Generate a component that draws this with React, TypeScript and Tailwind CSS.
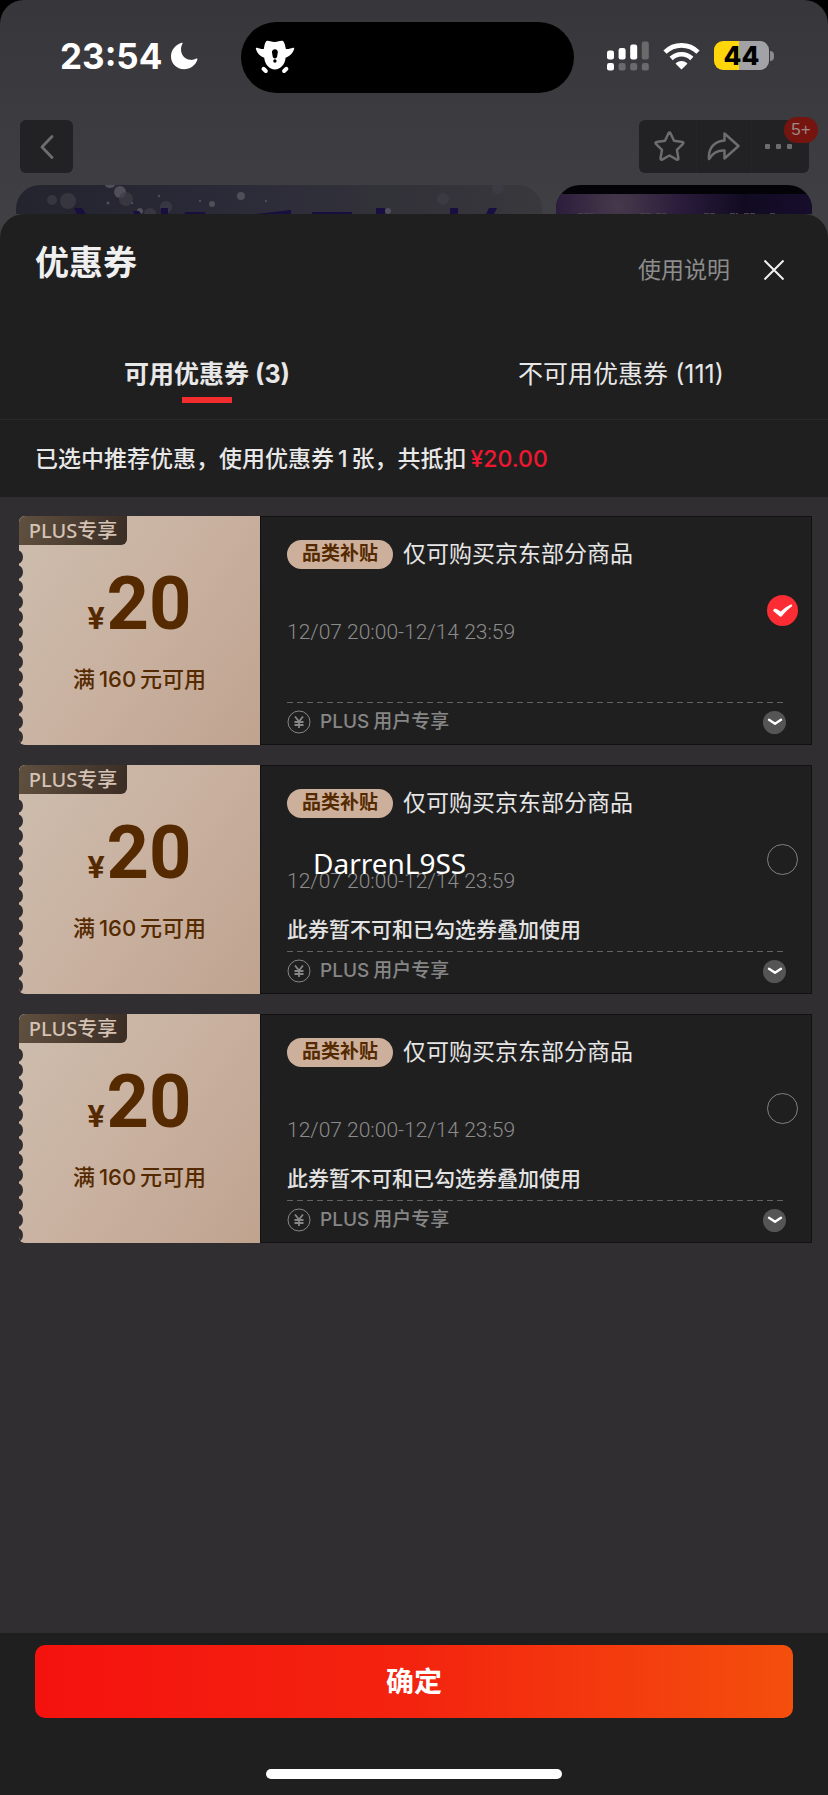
import { useState } from "react";

type Coupon = { id: number; note?: string };

const COUPONS: Coupon[] = [
  { id: 1 },
  { id: 2, note: "此券暂不可和已勾选券叠加使用" },
  { id: 3, note: "此券暂不可和已勾选券叠加使用" },
];

const NOTCHES = [0, 1, 2, 3, 4, 5, 6, 7, 8, 9, 10, 11, 12];

function StatusBar() {
  return (
    <div className="flex h-[93px] items-end justify-between">
      <div className="flex h-[71px] w-[241px] items-center gap-2 pb-1 pl-[60px] text-white">
        <span className="text-[35px] leading-[40px] font-bold">23:54</span>
        <svg className="h-7 w-7" viewBox="0 0 28 28" fill="currentColor" aria-hidden="true">
          <path d="M11.6.8C4.900 3 1 8.500 1 14.500 1 21.800 6.800 27.200 14 27.200c6.200 0 11.800-4.200 13.400-9.800.2-.8-.4-1.200-1.100-.8-2 1.100-4 1.500-6.100 1.200-5.400-.7-9.200-5-9.200-10.400 0-2 .5-3.900 1.500-5.600.4-.7 0-1.200-.9-1z" />
        </svg>
      </div>
      <div className="flex h-[71px] w-[333px] items-center rounded-full bg-black pb-0.5 pl-3.5">
        <svg className="h-[34px] w-10" viewBox="0 0 40 34" aria-hidden="true">
          <path
            fill="#fff"
            d="M11.500 1C13 0 15.500 1.900 19.500 1.900S26 0 28 1c1.500 1 2.100 4.500 2.900 8 2.300.4 5-.6 7.100-1.200.9-.2 1.500.4 1.200 1.300-1.200 3.600-4.200 7.400-8.600 8.700C30 24.500 25.500 29.500 19.900 29.500S10 24.500 9.200 17.800C4.800 16.500 2 12.700.9 9.100.6 8.200 1.200 7.600 2.100 7.800 4.300 8.400 6.400 9.400 8.800 9c.6-3.500 1.200-7 2.700-8z"
          />
          <path d="M19.900 9.200c-1.900 0-3.100 1.400-2.900 3.200l.7 4.200c.2 1.200 1 1.800 2.200 1.800s2-.6 2.200-1.800l.7-4.200c.2-1.800-1-3.200-2.900-3.200z" />
          <circle cx="19.900" cy="21" r="1.700" />
          <path d="M8.500 28.800l2.300 2.200M31.400 28.800L29.100 31" stroke="#fff" strokeWidth="4" strokeLinecap="round" />
        </svg>
      </div>
      <div className="flex h-[71px] w-[254px] items-center gap-3.5 pb-1 pl-[33px] text-white">
        <svg className="h-[30px] w-[42px]" viewBox="0 0 42 30" fill="currentColor" aria-hidden="true">
          <rect x="0" y="9.500" width="7" height="9" rx="2.200" />
          <rect x="11.600" y="7" width="7" height="11.500" rx="2.200" />
          <rect x="23.200" y="3.500" width="7" height="15" rx="2.200" />
          <rect x="34.800" y="0.500" width="7" height="18" rx="2.200" opacity=".25" />
          <rect x="0" y="22" width="7" height="7.500" rx="2.200" />
          <rect x="11.600" y="22" width="7" height="7.500" rx="2.200" opacity=".25" />
          <rect x="23.200" y="22" width="7" height="7.500" rx="2.200" opacity=".25" />
          <rect x="34.800" y="22" width="7" height="7.500" rx="2.200" opacity=".25" />
        </svg>
        <svg className="h-7 w-[37px]" viewBox="0 0 37 28" aria-hidden="true">
          <g fill="none" stroke="currentColor" strokeWidth="4.600">
            <path d="M2 10.100a23.500 23.500 0 0 1 33 0" />
            <path d="M8.200 16.500a14.700 14.700 0 0 1 20.600 0" />
          </g>
          <path fill="currentColor" d="M18.500 27.600l-5.600-5.500c-.3-.4-.3-.9.1-1.200a8.600 8.600 0 0 1 11 0c.4.3.4.8.1 1.200z" />
        </svg>
        <div className="flex items-center gap-px">
          <span className="flex h-[29px] w-[55px] items-center justify-center rounded-[9px] bg-[linear-gradient(90deg,#ffd60a_45%,#a3a3a7_45%)] text-[26px] leading-[29px] font-extrabold text-black">
            44
          </span>
          <span className="h-2.5 w-1 rounded-r-full bg-[#8b8b8f]" />
        </div>
      </div>
    </div>
  );
}

function Toolbar() {
  return (
    <div className="mt-[27px] flex justify-between pr-[19px] pl-5 text-[#6d6d6f]">
      <button type="button" aria-label="返回" className="flex h-[53px] w-[53px] items-center justify-center rounded-md bg-[#222224]">
        <svg className="h-6 w-4" viewBox="0 0 16 24" fill="none" stroke="currentColor" strokeWidth="2.800" strokeLinecap="round" strokeLinejoin="round">
          <path d="M13 1.500L3 12l10 10.500" />
        </svg>
      </button>
      <div className="relative grid h-[53px] w-[170px] grid-cols-3 rounded-md bg-[#222224]">
        <button type="button" aria-label="收藏" className="flex items-center justify-center pl-1">
          <svg className="h-[31px] w-[31px]" viewBox="0 0 31 31" fill="none" stroke="currentColor" strokeWidth="2.500" strokeLinejoin="round">
            <path d="M15.500 1.600c.5 0 .8.300 1 .7l3.500 7.400 8.400 1.200c1 .2 1.300 1.200.6 1.900l-6.100 6 1.500 8.600c.2 1-.7 1.600-1.600 1.200l-7.300-4.100-7.400 4.100c-.9.400-1.700-.2-1.600-1.200L8 18.800l-6.100-6c-.7-.7-.3-1.700.7-1.900L11 9.700l3.500-7.400c.2-.4.5-.7 1-.7z" />
          </svg>
        </button>
        <button type="button" aria-label="分享" className="flex items-center justify-center border-x border-[#252527]">
          <svg className="h-[31px] w-[33px]" viewBox="0 0 33 31" fill="none" stroke="currentColor" strokeWidth="2.500" strokeLinejoin="round">
            <path d="M17.500 2.500L31.500 15 17.500 27.500v-8C10.500 19 6 21.500 2 28 1 17 7.500 10 17.500 9.500z" />
          </svg>
        </button>
        <button type="button" aria-label="更多" className="flex items-center justify-center gap-1.5 pr-1">
          <span className="h-[5px] w-[5px] rounded-[1px] bg-[#6d6d6f]" />
          <span className="h-[5px] w-[5px] rounded-[1px] bg-[#6d6d6f]" />
          <span className="h-[5px] w-[5px] rounded-[1px] bg-[#6d6d6f]" />
        </button>
        <span className="absolute -top-[3px] -right-[9px] flex h-[26px] w-[34px] items-center justify-center rounded-full bg-[#76150f] font-['Liberation_Sans'] text-[17px] leading-5 text-[#9d8886]">
          5+
        </span>
      </div>
    </div>
  );
}

function Banners() {
  return (
    <div className="mt-3 flex h-[29px] gap-3.5 px-4" aria-hidden="true">
      <div className="flex-1 overflow-hidden rounded-t-[24px] bg-[linear-gradient(90deg,#24242f,#2b2a38_35%,#33323a_70%,#39383d)]">
        <svg className="h-[29px] w-full" viewBox="0 0 526 29" preserveAspectRatio="xMinYMin slice">
          <g fill="#504f57">
            <circle cx="104" cy="7" r="6" />
            <ellipse cx="94" cy="0" rx="5" ry="3" />
            <circle cx="225" cy="11" r="4" />
            <circle cx="196" cy="19" r="3" />
            <circle cx="124" cy="26" r="3" />
            <circle cx="372" cy="26" r="3" />
            <circle cx="92" cy="18" r="1.500" />
            <circle cx="143" cy="11" r="1.200" />
            <circle cx="184" cy="16" r="1.200" />
            <circle cx="250" cy="16" r="1.200" />
            <circle cx="116" cy="18" r="1.200" />
          </g>
          <g fill="#3f3e47" opacity=".7">
            <circle cx="52" cy="16" r="8" />
            <circle cx="36" cy="15" r="5" />
            <circle cx="110" cy="14" r="7" />
            <circle cx="150" cy="22" r="6" />
            <circle cx="134" cy="29" r="6" />
            <circle cx="427" cy="14" r="6" />
            <circle cx="482" cy="3" r="6" />
          </g>
          <g fill="#180f40">
            <path d="M58 23h8l4 6h-9zM117 26h6l2 3h-7zM145 23h7v6h-7zM170 27h18l2 2h-22zM240 29l35-4v4zM296 27h40v2h-40zM360 23h9v6h-9zM434 23h8v6h-8zM473 23h8l-3 6h-8z" />
          </g>
        </svg>
      </div>
      <div className="w-[256px] overflow-hidden rounded-t-[24px] bg-[#040308] pt-[9px]">
        <div className="h-5 bg-[radial-gradient(circle_at_24%_60%,#47394b,#2b1c3c_32%,#110b22_65%,#170d2c)]">
          <svg className="h-5 w-full" viewBox="0 0 256 20" preserveAspectRatio="xMinYMin slice">
            <path d="M22 19.500h15M84 19.500h12M100 19.500h10M148 19.500h12M174 19.500h8M188 19.500h12M214 19.500h5" stroke="#4a414e" strokeDasharray="5 1" />
          </svg>
        </div>
      </div>
    </div>
  );
}

function CouponCard({
  coupon,
  checked,
  onToggle,
}: {
  coupon: Coupon;
  checked: boolean;
  onToggle: () => void;
}) {
  return (
    <li className="flex h-[229px]">
      <div className="relative flex w-[241px] shrink-0 flex-col items-center overflow-hidden rounded-l-md bg-[linear-gradient(125deg,#cdbdad,#c9b1a0_50%,#bfa38f)] text-[#552a00]">
        <svg className="absolute bottom-0 left-0 h-[199px] w-1" viewBox="0 0 4 199" fill="#302e30" aria-hidden="true">
          {NOTCHES.map((n) => (
            <ellipse key={n} cx="-2" cy={11 + n * 15} rx="6" ry="7" />
          ))}
        </svg>
        <span className="absolute top-0 left-0 flex h-[29px] w-[108px] items-center justify-center rounded-tl-md rounded-br-md bg-[linear-gradient(100deg,#60503f,#3a2d25)] font-['Noto_Sans','Noto_Sans_CJK_SC',sans-serif] text-[20px] leading-7 font-medium text-[#d4c2b5]">
          PLUS专享
        </span>
        <div className="mt-[52px] flex items-baseline gap-0.5 font-['Roboto'] font-bold">
          <span className="text-[32px] leading-none">¥</span>
          <span className="text-[74px] leading-[72px]">20</span>
        </div>
        <p className="mt-[25px] flex items-baseline gap-1 text-[22px] leading-7 font-medium">
          <span>满</span>
          <span>160</span>
          <span>元可用</span>
        </p>
      </div>
      <div className="flex min-w-0 flex-1 flex-col border border-[#111] bg-[#1f1f1f] pr-[25px] pl-[26px]">
        <div className="mt-[22px] flex h-[30px] items-center gap-2.5">
          <span className="flex h-[29px] w-[106px] items-center justify-center rounded-full bg-[#cdb09c] text-[19px] leading-7 font-bold text-[#552a00]">
            品类补贴
          </span>
          <h2 className="text-[23px] leading-[30px] font-normal text-[#e6e6e6]">仅可购买京东部分商品</h2>
        </div>
        <div className="-mr-3 mt-[26px] flex h-[62px] items-start justify-between">
          <time className="mt-[23px] font-['Roboto'] text-[21px] leading-7 font-light text-[#8c8c8c]">
            12/07 20:00-12/14 23:59
          </time>
          <label className="grid h-[31px] w-[31px] cursor-pointer">
            <input
              type="checkbox"
              checked={checked}
              onChange={onToggle}
              aria-label="选择优惠券"
              className="col-start-1 row-start-1 h-[31px] w-[31px] cursor-pointer appearance-none rounded-full border border-[#808080] checked:border-0 checked:bg-[#fb2c33]"
            />
            {checked && (
              <svg className="pointer-events-none col-start-1 row-start-1 h-[31px] w-[31px]" viewBox="0 0 31 31" fill="#fff" aria-hidden="true">
                <path d="M6.300 15.200c.5-1.300 2-1.800 3.200-1.100l4.300 2.500c3-3 6.300-5.300 10-7 1.400-.4 2 .9.900 1.900-3.800 2.900-6.900 5.900-9.700 9.600-.7.900-1.600.9-2.400.1l-5.700-4.700c-.5-.4-.7-.8-.6-1.300z" />
              </svg>
            )}
          </label>
        </div>
        <p className="mt-2.5 h-[35px] text-[21px] leading-7 font-medium text-[#e3e3e3]">{coupon.note}</p>
        <svg className="h-px w-full" aria-hidden="true">
          <line x1="0" y1="0.500" x2="100%" y2="0.500" stroke="#636363" strokeDasharray="6 4" />
        </svg>
        <div className="flex h-[38px] items-center justify-between text-[#868686]">
          <div className="flex items-center gap-[9px]">
            <svg className="h-6 w-6" viewBox="0 0 24 24" fill="none" stroke="currentColor" aria-hidden="true">
              <circle cx="12" cy="12" r="11" />
              <path d="M8 6.500l4 5 4-5M7.500 12h9M7.500 15h9M12 11.500V18" strokeWidth="1.800" />
            </svg>
            <span className="flex items-baseline gap-1 text-[19px] leading-6 font-medium">
              <span>PLUS</span>
              <span>用户专享</span>
            </span>
          </div>
          <button type="button" aria-label="展开详情" className="flex h-[23px] w-[23px] items-center justify-center rounded-full bg-[#555]">
            <svg className="h-2 w-4" viewBox="0 0 16 8" fill="none" stroke="#fff" strokeWidth="2.400" strokeLinecap="round" strokeLinejoin="round">
              <path d="M2 1.800l6 3.900 6-3.900" />
            </svg>
          </button>
        </div>
      </div>
    </li>
  );
}

export default function App() {
  const [selected, setSelected] = useState<number>(1);

  return (
    <div className="flex min-h-screen flex-col bg-black font-['Inter','Noto_Sans_CJK_SC',sans-serif]">
      <div className="flex flex-1 flex-col rounded-t-[24px] bg-[linear-gradient(180deg,#37363a,#403f43_220px)]">
        <header>
          <StatusBar />
          <Toolbar />
          <Banners />
        </header>

        <section className="flex flex-1 flex-col overflow-hidden rounded-t-[24px] bg-[#1f1f1f]">
          <div className="flex h-[109px] items-start justify-between pr-11 pl-[35px]">
            <h1 className="mt-[27px] text-[34px] leading-[44px] font-bold text-[#f0f0f0]">优惠券</h1>
            <div className="mt-[41px] flex items-center gap-[34px]">
              <a href="#help" className="text-[23px] leading-[30px] text-[#8c8c8c]">使用说明</a>
              <button type="button" aria-label="关闭" className="text-[#f0f0f0]">
                <svg className="h-5 w-5" viewBox="0 0 20 20" fill="none" stroke="currentColor" strokeWidth="2">
                  <path d="M.5.5l19 19M19.500.5l-19 19" />
                </svg>
              </button>
            </div>
          </div>

          <div role="tablist" className="grid h-[97px] grid-cols-2 border-b border-[#292929]">
            <button type="button" role="tab" aria-selected="true" className="flex flex-col items-center pt-[34px] text-[#e8e8e8]">
              <span className="text-[25px] leading-[34px] font-bold">可用优惠券 (3)</span>
              <span className="mt-1.5 h-1.5 w-[50px] bg-[#f32d2d]" />
            </button>
            <button type="button" role="tab" aria-selected="false" className="flex flex-col items-center pt-[34px] text-[#e8e8e8]">
              <span className="text-[25px] leading-[34px]">不可用优惠券 (111)</span>
            </button>
          </div>

          <p className="flex h-[77px] items-center gap-1 px-[35px] text-[23px] leading-[30px] font-medium text-[#e8e8e8]">
            <span>已选中推荐优惠，使用优惠券</span>
            <span>1</span>
            <span>张，共抵扣</span>
            <span className="text-[#ef1730]">¥20.00</span>
          </p>

          <div className="relative flex-1 bg-[#302e30] pt-[19px] pr-4 pl-[19px]">
            <ul className="flex flex-col gap-5">
              {COUPONS.map((c) => (
                <CouponCard
                  key={c.id}
                  coupon={c}
                  checked={selected === c.id}
                  onToggle={() => setSelected(selected === c.id ? 0 : c.id)}
                />
              ))}
            </ul>
            <span className="pointer-events-none absolute top-[346px] left-[313px] font-['Noto_Sans'] text-[28px] leading-10 text-white">
              DarrenL9SS
            </span>
          </div>

          <footer className="flex flex-col items-center px-[35px] pt-3 pb-4">
            <button
              type="button"
              className="h-[73px] w-full rounded-[10px] bg-[linear-gradient(90deg,#f5120e,#f3240f_50%,#f44f0d)] text-[28px] leading-9 font-bold text-white"
            >
              确定
            </button>
            <span className="mt-[51px] h-2.5 w-[296px] rounded-full bg-white" />
          </footer>
        </section>
      </div>
    </div>
  );
}
